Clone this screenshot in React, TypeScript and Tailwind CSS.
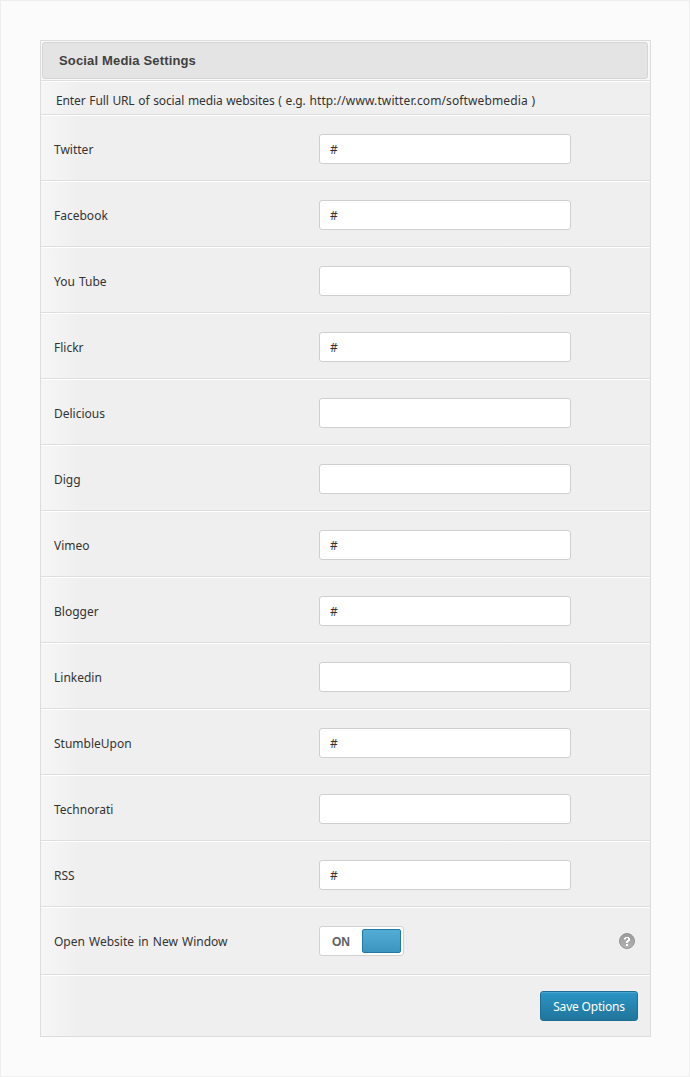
import clsx from "clsx";

interface Field {
  label: string;
  value: string;
}

const fields: Field[] = [
  { label: "Twitter", value: "#" },
  { label: "Facebook", value: "#" },
  { label: "You Tube", value: "" },
  { label: "Flickr", value: "#" },
  { label: "Delicious", value: "" },
  { label: "Digg", value: "" },
  { label: "Vimeo", value: "#" },
  { label: "Blogger", value: "#" },
  { label: "Linkedin", value: "" },
  { label: "StumbleUpon", value: "#" },
  { label: "Technorati", value: "" },
  { label: "RSS", value: "#" },
];

// light top edge + grey bottom edge
const rowClass =
  "flex items-start border-t border-b border-t-white border-b-[#dedede]";

function SocialRow({ label, value }: Field) {
  return (
    <div className={clsx(rowClass, "h-[66px] pt-[18px] pl-[13px]")}>
      <label className="w-[265px] leading-[32px]">{label}</label>
      <input
        className="w-[252px] h-[30px] pl-[10px] rounded-[3px] border border-[#cfcfcf] bg-white outline-none"
        defaultValue={value}
      />
    </div>
  );
}

function HelpIcon() {
  return (
    <svg width="16" height="16" viewBox="0 0 16 16">
      <defs>
        <linearGradient id="help" x1="0" y1="0" x2="0" y2="1">
          <stop offset="0" stopColor="#999999" />
          <stop offset="1" stopColor="#b4b4b4" />
        </linearGradient>
      </defs>
      <circle cx="8" cy="8" r="7.5" fill="url(#help)" stroke="#949494" />
      <path
        d="M5 6.5H7V5H9V7H8V8H7V10H9V9H10V8H11V5H10V4H6V5H5Z"
        fill="#fff"
      />
      <rect x="7" y="11" width="2" height="2" fill="#fff" />
    </svg>
  );
}

export default function App() {
  return (
    <div className="w-[690px] h-[1077px] p-[39px] border border-[#eeeeee] bg-[#fbfbfb] font-['Noto_Sans',sans-serif] text-[12px] [word-spacing:1px] text-[#333333]">
      <div className="w-[611px] h-[997px] border border-[#dcdcdc] bg-[#efefef] bg-linear-to-r from-[#f6f6f6] to-[#efefef] to-[38px]">
        <div className="h-10 pt-px px-px pb-px border-b border-b-[#dedede] bg-[#f8f8f8]">
          <h1 className="w-[606px] h-[37px] pl-4 rounded-[3px] border border-[#d5d5d5] bg-[#e4e4e4] font-['Liberation_Sans',Arial,sans-serif] text-[13px] font-bold tracking-[0.16px] [word-spacing:0px] leading-[35px] text-[#404040]">
            Social Media Settings
          </h1>
        </div>
        <div className={clsx(rowClass, "h-[34px] pl-[15px]")}>
          <p className="leading-[38px] whitespace-pre tracking-[-0.13px] [word-spacing:0.8px]">
            Enter Full URL of social media websites ( e.g.{" "}
            <span className="tracking-[0.12px]">
              http://www.twitter.com/softwebmedia
            </span>{" "}
            )
          </p>
        </div>
        {fields.map((field) => (
          <SocialRow key={field.label} {...field} />
        ))}
        <div className={clsx(rowClass, "h-[68px] pt-[18px] pl-[13px]")}>
          <span className="w-[265px] leading-[32px]">
            Open Website in New Window
          </span>
          <button className="flex w-[85px] h-[30px] rounded-[3px] border border-[#d2d2d2] bg-white">
            <span className="w-[42px] font-['Liberation_Sans',Arial,sans-serif] text-[12px] font-bold leading-[30px] text-[#606060]">
              ON
            </span>
            <span className="w-[39px] h-6 mt-[2px] rounded-[2px] border border-[#2179a4] bg-linear-to-b from-[#52acd5] to-[#3c95be]" />
          </button>
          <span className="ml-[215px] mt-[7px]">
            <HelpIcon />
          </span>
        </div>
        <div className="flex justify-end h-[61px] pt-[15px] pr-3 border-t border-white">
          <button className="w-[98px] h-[30px] pt-px rounded-[3px] border border-[#1e6f96] bg-linear-to-b from-[#2a95c5] to-[#21759b] tracking-[-0.2px] text-white shadow-[inset_0_1px_0_#4aa6cf]">
            Save Options
          </button>
        </div>
      </div>
    </div>
  );
}
